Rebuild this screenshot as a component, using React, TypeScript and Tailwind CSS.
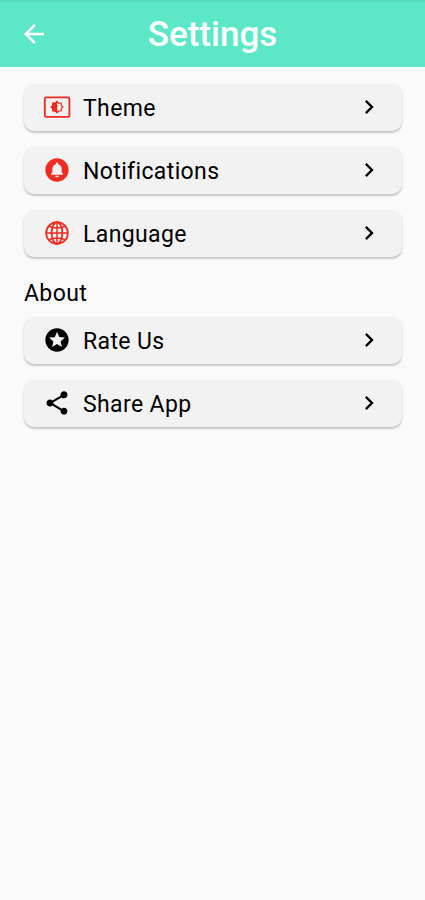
import type { ReactNode } from "react";
import {
  MdArrowBack,
  MdChevronRight,
  MdCircleNotifications,
  MdShare,
  MdStars,
} from "react-icons/md";

type SettingsRowProps = {
  icon: ReactNode;
  label: string;
};

const BrightnessIcon = () => (
  <svg viewBox="0 0 28 28" className="size-7 text-[#ee2a20]" fill="none" stroke="currentColor">
    <rect x="1.8" y="4.3" width="24.6" height="19.6" rx="1.6" strokeWidth="1.8" />
    <path
      d="M14 8.3l1.8 1.8h2.4v2.3L19.9 14l-1.7 1.7V18h-2.4L14 19.7 12.2 18H9.8v-2.3L8.1 14l1.7-1.6v-2.3h2.4z"
      strokeWidth="1.2"
      strokeLinejoin="round"
    />
    <path d="M14 8.3L12.2 10.1H9.8v2.3L8.1 14l1.7 1.7V18h2.4L14 19.7z" fill="currentColor" strokeWidth="0.6" />
  </svg>
);

const GlobeIcon = () => (
  <svg viewBox="0 0 24 24" className="size-7 text-[#f12b20]" fill="none" stroke="currentColor" strokeWidth="1.5">
    <circle cx="12" cy="12" r="9.3" />
    <ellipse cx="12" cy="12" rx="4.6" ry="9.3" />
    <path d="M12 2.7v18.6M2.7 12h18.6M5 6.1c3.8 2.2 10.2 2.2 14 0M5 17.9c3.8-2.2 10.2-2.2 14 0" strokeWidth="1.2" />
  </svg>
);

const SettingsRow = ({ icon, label }: SettingsRowProps) => (
  <button className="flex h-[47px] w-full items-center rounded-[10px] bg-[#f2f2f2] pr-[19px] pb-px pl-[19px] shadow-[0_2px_2px_rgba(0,0,0,0.2),0_0_2px_rgba(0,0,0,0.06)]">
    {icon}
    <span className="ml-3 flex-1 pt-[3px] text-left text-[23px] leading-7 tracking-[0.37px]">{label}</span>
    <MdChevronRight className="size-7" />
  </button>
);

export default function App() {
  return (
    <div className="min-h-[900px] w-full bg-[#fafafa] font-['Roboto',sans-serif] text-black">
      <header className="grid h-[67px] grid-cols-[68px_1fr_68px] items-center border-t-2 border-[#55d8b8] bg-[#5ce8c6] pb-[2px] text-white">
        <MdArrowBack className="ml-[19px] size-[30px]" />
        <h1 className="pt-[2px] text-center text-[35px] leading-10 font-medium">Settings</h1>
      </header>
      <main className="pt-[17px] pr-[23px] pl-6">
        <section className="flex flex-col gap-4">
          <SettingsRow icon={<BrightnessIcon />} label="Theme" />
          <SettingsRow icon={<MdCircleNotifications className="size-7 text-[#f12b20]" />} label="Notifications" />
          <SettingsRow icon={<GlobeIcon />} label="Language" />
        </section>
        <h2 className="mt-[23px] mb-[9px] text-[23px] leading-7 tracking-[0.37px]">About</h2>
        <section className="flex flex-col gap-4">
          <SettingsRow icon={<MdStars className="size-7 text-black" />} label="Rate Us" />
          <SettingsRow icon={<MdShare className="size-7 text-black" />} label="Share App" />
        </section>
      </main>
    </div>
  );
}
